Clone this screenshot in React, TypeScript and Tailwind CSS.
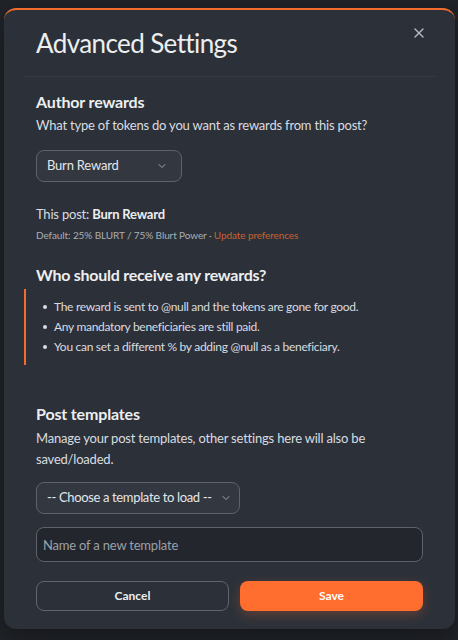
import React from "react"
import { ChevronDown, X } from "lucide-react"

const font = { fontFamily: '"Lato", "Noto Sans", sans-serif' }

function SelectBox({ label, className }: { label: string; className: string }) {
  return (
    <button
      type="button"
      className={`flex h-8 items-center justify-between gap-2 whitespace-nowrap rounded-lg border border-[#5d636b] bg-[#323740] pl-[10px] pr-[13px] text-[13px] text-[#e4e6e9] ${className}`}
    >
      <span>{label}</span>
      <ChevronDown size={12} strokeWidth={1.75} className="shrink-0 text-[#aeb3ba]" />
    </button>
  )
}

const notes = [
  "The reward is sent to @null and the tokens are gone for good.",
  "Any mandatory beneficiaries are still paid.",
  "You can set a different % by adding @null as a beneficiary.",
]

export default function App() {
  return (
    <div className="min-h-screen bg-[#202328] pt-2 pl-1" style={font}>
      <div className="w-[451px] rounded-xl border-t-2 border-[#f26b2f] bg-[#2c3139] shadow-[0_8px_24px_rgba(0,0,0,0.35)]">
        {/* header */}
        <div className="flex items-start justify-between pl-8 pr-[28px] pt-[15px] pb-[15px]">
          <h2 className="text-[26px] leading-[36px] tracking-[-0.6px] text-[#eceef0]">Advanced Settings</h2>
          <button type="button" className="text-[#b4b9c0]">
            <X size={16} strokeWidth={2} />
          </button>
        </div>
        <div className="mx-5 h-px bg-[#363b44]" />

        <div className="px-8 pt-[14px] pb-[18px]">
          <h3 className="text-[16px] font-bold leading-[22px] tracking-[-0.15px] text-[#eceef0]">Author rewards</h3>
          <p className="text-[13px] leading-[24px] tracking-[-0.2px] text-[#d9dce0]">
            What type of tokens do you want as rewards from this post?
          </p>
          <SelectBox label="Burn Reward" className="mt-[13px] w-[146px] tracking-[-0.2px]" />

          <p className="mt-[20px] text-[13px] leading-[24px] tracking-[-0.2px] text-[#d9dce0]">
            This post: <span className="font-bold text-[#eceef0]">Burn Reward</span>
          </p>
          <p className="mt-px text-[10px] leading-[16px] tracking-[-0.1px] text-[#a9aeb5]">
            Default: 25% BLURT / 75% Blurt Power ·{" "}
            <span className="text-[#c9612f]">Update preferences</span>
          </p>

          <h3 className="mt-[18px] text-[16px] font-bold leading-[28px] tracking-[-0.25px] text-[#eceef0]">
            Who should receive any rewards?
          </h3>
          <ul className="-ml-3 flex flex-col border-l-2 border-[#f26b2f] py-2 pl-[17px]">
            {notes.map((note) => (
              <li
                key={note}
                className="flex items-center gap-[7px] text-[12px] leading-[20px] tracking-[-0.3px] text-[#d9dce0]"
              >
                <span className="h-[4px] w-[4px] shrink-0 rounded-full bg-[#d9dce0]" />
                {note}
              </li>
            ))}
          </ul>

          <h3 className="mt-[35px] text-[16px] font-bold leading-[28px] tracking-[-0.15px] text-[#eceef0]">
            Post templates
          </h3>
          <p className="text-[13px] leading-[21px] tracking-[-0.2px] text-[#d9dce0]">
            Manage your post templates, other settings here will also be saved/loaded.
          </p>
          <SelectBox label="-- Choose a template to load --" className="mt-[12px] w-[204px] tracking-[-0.35px]" />

          <input
            type="text"
            placeholder="Name of a new template"
            className="mt-[13px] block h-[35px] w-full rounded-lg border border-[#5d636b] bg-[#23262c] px-[6px] text-[13px] tracking-[-0.2px] text-[#e4e6e9] outline-none placeholder:text-[#9ba1a9]"
          />

          <div className="mt-[19px] flex gap-[11px]">
            <button
              type="button"
              className="h-[30px] flex-1 rounded-lg border border-[#60656d] text-[12px] font-bold text-[#eceef0]"
            >
              Cancel
            </button>
            <button
              type="button"
              className="h-[30px] w-[183px] rounded-lg bg-[#ff6d2f] text-[12px] font-bold text-white shadow-[0_4px_12px_rgba(255,109,47,0.25)]"
            >
              Save
            </button>
          </div>
        </div>
      </div>
    </div>
  )
}
